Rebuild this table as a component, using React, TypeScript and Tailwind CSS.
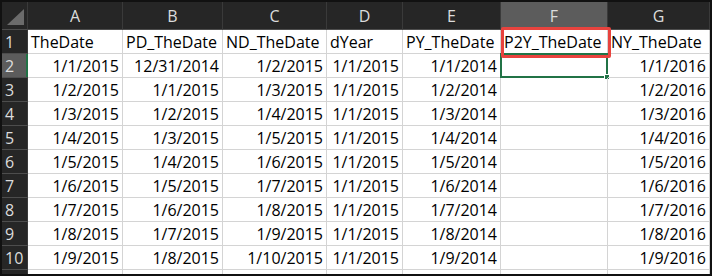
const columns = ['A', 'B', 'C', 'D', 'E', 'F', 'G'];
const widths = ['w-[95px]', 'w-[100px]', 'w-[104px]', 'w-[76px]', 'w-[98px]', 'w-[107px]', 'w-[102px]'];
const headers = ['TheDate', 'PD_TheDate', 'ND_TheDate', 'dYear', 'PY_TheDate', 'P2Y_TheDate', 'NY_TheDate'];

const rows: string[][] = Array.from({ length: 9 }, (_, i) => [
  `1/${i + 1}/2015`,
  i === 0 ? '12/31/2014' : `1/${i}/2015`,
  `1/${i + 2}/2015`,
  '1/1/2015',
  `1/${i + 1}/2014`,
  '',
  `1/${i + 1}/2016`,
]);

function RowHeader({ label, selected }: { label: string; selected?: boolean }) {
  return (
    <div
      className={
        'relative flex h-full w-[26px] shrink-0 items-center border-r border-b border-r-[#3a3a3a] border-b-[#4d4d4d] pl-[3px] text-[#dcdcdc] ' +
        (selected ? 'bg-[#5c5c5c]' : 'bg-[#262626]')
      }
    >
      {label}
      {selected && <div className="absolute -right-px top-0 bottom-0 w-[2px] bg-[#217346]" />}
    </div>
  );
}

export default function App() {
  return (
    <div
      className="h-[276px] w-[712px] overflow-hidden border-2 border-[#111] bg-white text-[16px]"
      style={{ fontFamily: '"Open Sans", "Noto Sans", sans-serif' }}
    >
      {/* column letters */}
      <div className="flex h-[28px] bg-[#262626]">
        <div className="flex h-full w-[26px] shrink-0 items-end justify-end border-r border-b border-r-[#3a3a3a] border-b-[#4d4d4d] pr-[3px] pb-[4px]">
          <svg width="17" height="16" viewBox="0 0 17 16">
            <polygon points="0,16 17,16 17,0" fill="#6b6b6b" />
          </svg>
        </div>
        {columns.map((c, i) => (
          <div
            key={c}
            className={
              'flex h-full shrink-0 items-center justify-center border-r border-b border-r-[#3a3a3a] border-b-[#4d4d4d] leading-none text-[#dcdcdc] ' +
              widths[i] +
              (c === 'F' ? ' bg-[#5c5c5c]' : '')
            }
          >
            {c}
          </div>
        ))}
      </div>

      {/* field names */}
      <div className="flex h-[24px]">
        <RowHeader label="1" />
        {headers.map((h, i) => (
          <div
            key={h}
            className={
              'relative flex h-full shrink-0 items-center whitespace-nowrap border-r border-b border-[#d4d4d4] pl-[3px] text-black ' +
              widths[i]
            }
          >
            {h}
            {i === 5 && (
              <div className="absolute -top-[3px] -right-[4px] -bottom-[5px] left-0 z-10 rounded-[2px] border-[3px] border-[#e8433e]" />
            )}
          </div>
        ))}
      </div>

      {rows.map((r, ri) => (
        <div key={ri} className="flex h-[24px]">
          <RowHeader label={String(ri + 2)} selected={ri === 0} />
          {r.map((v, ci) => (
            <div
              key={ci}
              className={
                'relative flex h-full shrink-0 items-center justify-end whitespace-nowrap border-r border-b border-[#d4d4d4] pr-[3px] text-black ' +
                widths[ci]
              }
            >
              {v}
              {ri === 0 && ci === 5 && (
                <div className="absolute -inset-px border-2 border-[#217346]">
                  <div className="absolute -right-[4px] -bottom-[4px] h-[6px] w-[6px] border border-white bg-[#217346]" />
                </div>
              )}
            </div>
          ))}
        </div>
      ))}

      <div className="flex h-[24px]">
        <RowHeader label="" />
        {widths.map((w, i) => (
          <div key={i} className={'h-full shrink-0 border-r border-[#d4d4d4] ' + w} />
        ))}
      </div>
    </div>
  );
}
